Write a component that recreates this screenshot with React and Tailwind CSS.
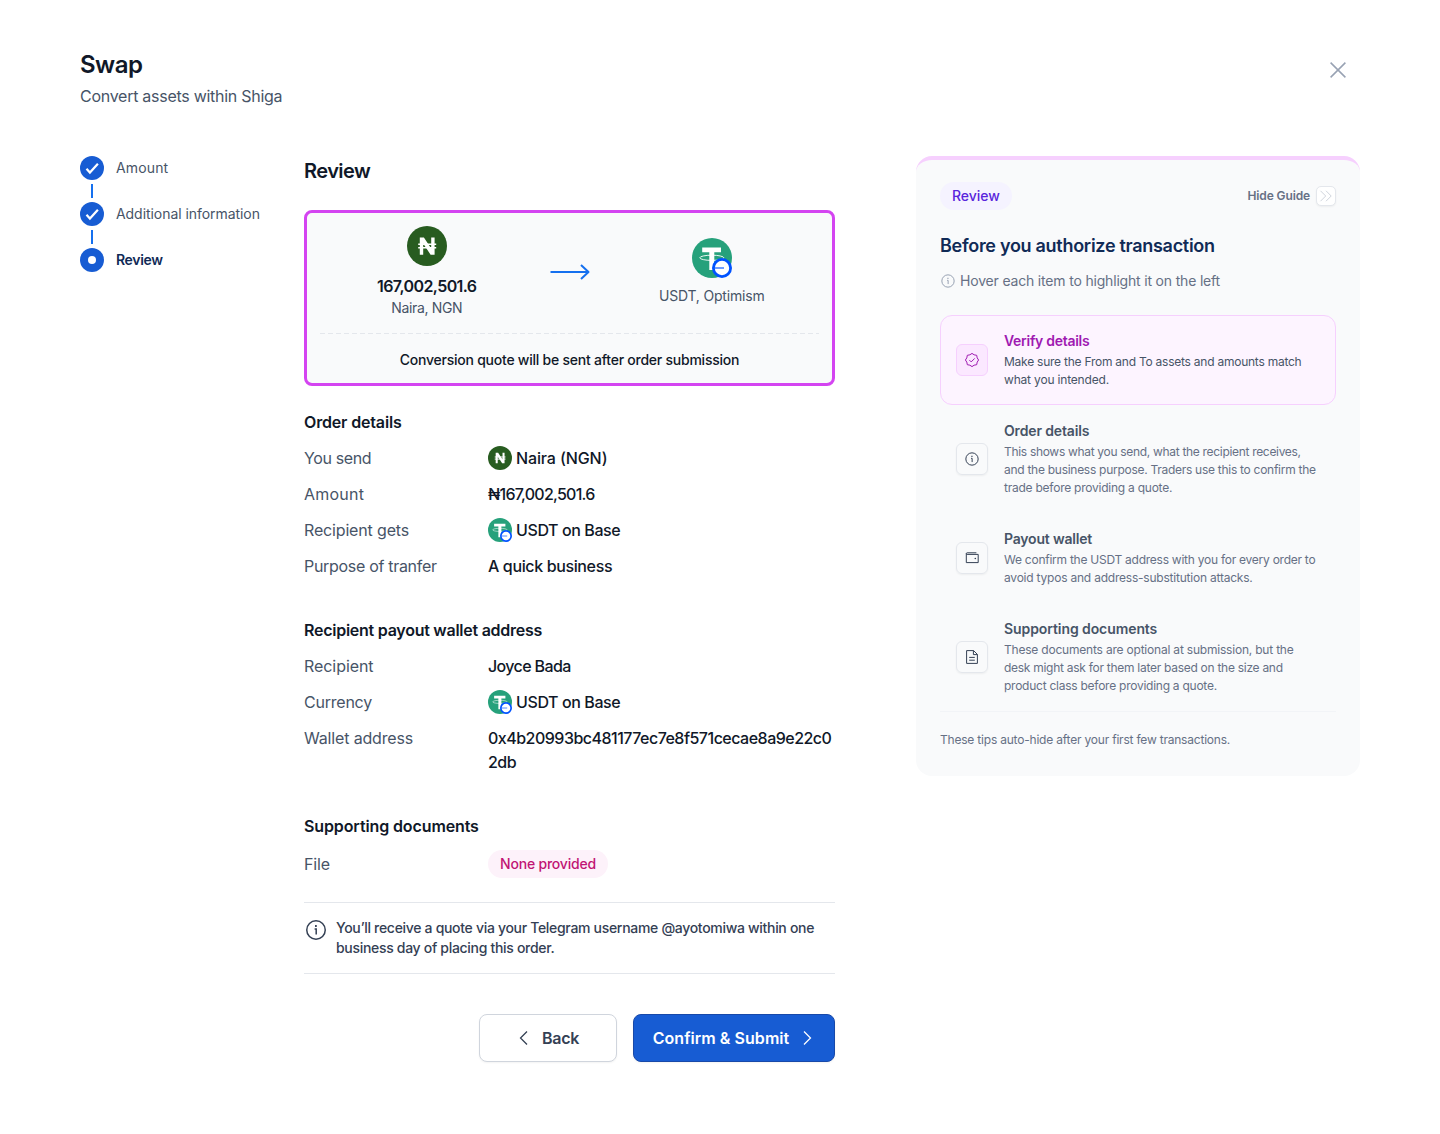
import React from "react";

function NairaIcon({ className }) {
  return (
    <svg viewBox="0 0 40 40" className={className} fill="none">
      <circle cx="20" cy="20" r="20" fill="#285c20" />
      <path d="M12.8 28.8V11.4h4.1l7.3 11V11.4h3.4v17.4h-4l-7.4-11.2v11.2z" fill="#fff" />
      <path d="M11.2 18.3h18M11.2 21.8h18" stroke="#fff" strokeWidth="1.6" />
    </svg>
  );
}

function UsdtIcon({ className }) {
  return (
    <svg viewBox="0 0 40 40" className={className} fill="none">
      <circle cx="20" cy="20" r="20" fill="#26a17b" />
      <path d="M10.2 9.6h18.8v4.6h-6.7V32h-5V14.2h-7.1z" fill="#fff" />
      <ellipse cx="19.8" cy="19.8" rx="12" ry="2.6" stroke="#fff" strokeWidth="0.9" />
      <circle cx="30" cy="30" r="8.6" fill="#fff" stroke="#0052ff" strokeWidth="2.8" />
      <path d="M22.5 30H32" stroke="#0052ff" strokeWidth="1.5" strokeOpacity="0.75" />
    </svg>
  );
}

function InfoIcon({ className, strokeWidth = 1.5 }) {
  return (
    <svg viewBox="0 0 24 24" className={className} fill="none" stroke="currentColor" strokeWidth={strokeWidth}>
      <circle cx="12" cy="12" r="9.25" />
      <path d="M10.6 11h1.6v5.6" />
      <path d="M11.9 7v1.9" strokeWidth={strokeWidth * 1.15} />
    </svg>
  );
}

function VerifyIcon({ className }) {
  return (
    <svg viewBox="0 0 16 16" className={className} fill="none" stroke="currentColor" strokeLinejoin="round">
      <path d="M8 1.4l2.1 1.4 2.6.5.5 2.6L14.6 8l-1.4 2.1-.5 2.6-2.6.5L8 14.6l-2.1-1.4-2.6-.5-.5-2.6L1.4 8l1.4-2.1.5-2.6 2.6-.5z" />
      <path d="M5.4 8.1l1.8 1.8 3.5-3.5" />
    </svg>
  );
}

function WalletIcon({ className }) {
  return (
    <svg viewBox="0 0 16 16" className={className} fill="none" stroke="currentColor">
      <path d="M12.4 2.8H3.1a.8.8 0 0 0-.8.8v9h11.9V4.4H3.1a.8.8 0 0 1-.8-.8" />
      <circle cx="11.3" cy="8.5" r="0.8" fill="currentColor" stroke="none" />
    </svg>
  );
}

function DocIcon({ className }) {
  return (
    <svg viewBox="0 0 16 16" className={className} fill="none" stroke="currentColor">
      <path d="M2.6 1.6h7l3.8 3.8v9H2.6z" />
      <path d="M9.4 1.6v4h4M5.2 8.4h5.6M5.2 11.2h5.6" />
    </svg>
  );
}

const steps = [
  { label: "Amount", done: true, tracking: "tracking-[0.01em]" },
  { label: "Additional information", done: true, tracking: "tracking-[-0.004em]" },
  { label: "Review", done: false, tracking: "tracking-[-0.025em]" },
];

const guideItems = [
  {
    title: "Verify details",
    titleClass: "tracking-[-0.02em]",
    lines: [
      { text: "Make sure the From and To assets and amounts match", tracking: "tracking-[-0.02em]" },
      { text: "what you intended.", tracking: "tracking-[-0.015em]" },
    ],
    icon: VerifyIcon,
    active: true,
  },
  {
    title: "Order details",
    titleClass: "tracking-[-0.01em]",
    lines: [
      { text: "This shows what you send, what the recipient receives,", tracking: "tracking-[-0.026em]" },
      { text: "and the business purpose. Traders use this to confirm the", tracking: "tracking-[-0.023em]" },
      { text: "trade before providing a quote.", tracking: "tracking-[-0.02em]" },
    ],
    icon: InfoIcon,
  },
  {
    title: "Payout wallet",
    titleClass: "tracking-[-0.014em]",
    lines: [
      { text: "We confirm the USDT address with you for every order to", tracking: "tracking-[-0.021em]" },
      { text: "avoid typos and address-substitution attacks.", tracking: "tracking-[-0.018em]" },
    ],
    icon: WalletIcon,
  },
  {
    title: "Supporting documents",
    titleClass: "tracking-[-0.006em]",
    lines: [
      { text: "These documents are optional at submission, but the", tracking: "tracking-[-0.017em]" },
      { text: "desk might ask for them later based on the size and", tracking: "tracking-[-0.023em]" },
      { text: "product class before providing a quote.", tracking: "tracking-[-0.021em]" },
    ],
    icon: DocIcon,
  },
];

function Stepper() {
  return (
    <ol className="flex w-56 shrink-0 flex-col gap-1">
      {steps.map((step, i) => (
        <React.Fragment key={step.label}>
          {i > 0 && <li className="ml-[11px] h-[14px] w-0.5 bg-[#1570ef]" />}
          <li className="flex items-center gap-3">
            <span className="flex size-6 items-center justify-center rounded-full bg-[#175cd3]">
              {step.done ? (
                <svg viewBox="0 0 24 24" className="size-6" fill="none" stroke="#fff" strokeWidth="2.2">
                  <path d="M6.5 12.8l3.4 3.8 8-8.8" />
                </svg>
              ) : (
                <span className="size-2 rounded-full bg-white" />
              )}
            </span>
            <span
              className={`whitespace-nowrap text-sm ${step.tracking} ${step.done ? "text-[#475467]" : "font-semibold text-[#102a56]"}`}
            >
              {step.label}
            </span>
          </li>
        </React.Fragment>
      ))}
    </ol>
  );
}

function Row({ label, labelClass = "", children }) {
  return (
    <div className="flex text-base leading-6">
      <dt className={`w-[184px] shrink-0 whitespace-nowrap text-[#475467] ${labelClass}`}>{label}</dt>
      <dd className="flex items-center gap-1 whitespace-nowrap font-medium text-[#101828]">{children}</dd>
    </div>
  );
}

function Section({ title, titleClass = "", children }) {
  return (
    <section className="flex flex-col gap-3">
      <h3 className={`text-base leading-6 font-semibold text-[#101828] ${titleClass}`}>{title}</h3>
      {children}
    </section>
  );
}

function SwapSummary() {
  return (
    <div className="mt-6 h-44 rounded-lg border-3 border-[#d444f1] bg-[#f9fafb] p-[13px]">
      <div className="flex h-[92px] items-center">
        <div className="flex flex-1 flex-col items-center">
          <NairaIcon className="size-10" />
          <p className="mt-2 text-base leading-6 font-semibold tracking-[-0.037em] text-[#101828]">167,002,501.6</p>
          <p className="text-sm leading-5 tracking-[-0.024em] text-[#475467]">Naira, NGN</p>
        </div>
        <div className="px-4">
          <svg viewBox="0 0 40 16" className="h-4 w-10" fill="none" stroke="#1570ef" strokeWidth="2">
            <path d="M.5 8h38M31 1l7.5 7L31 15" strokeLinejoin="round" />
          </svg>
        </div>
        <div className="flex flex-1 flex-col items-center">
          <UsdtIcon className="size-10" />
          <p className="mt-2 pr-px text-sm leading-5 tracking-[-0.013em] text-[#475467]">USDT, Optimism</p>
        </div>
      </div>
      <div className="mt-[15px] h-px bg-[repeating-linear-gradient(90deg,#e4e7ec_0_5px,transparent_5px_8px)]" />
      <p className="mt-4 text-center text-sm leading-5 font-medium tracking-[-0.017em] text-[#101828]">
        Conversion quote will be sent after order submission
      </p>
    </div>
  );
}

function Guide() {
  return (
    <aside className="ml-auto h-[620px] w-[444px] rounded-2xl border-t-4 border-[#f6d0fe] bg-[#f9fafb] px-6 pt-[22px]">
      <div className="flex items-center justify-between">
        <span className="flex h-7 items-center rounded-full bg-[#f5f3ff] px-3 text-sm font-medium tracking-[-0.003em] text-[#5925dc]">
          Review
        </span>
        <button className="flex items-center gap-1.5 text-xs font-semibold tracking-[-0.01em] text-[#667085]">
          Hide Guide
          <span className="flex size-5 items-center justify-center rounded-[5px] border border-[#e4e7ec] bg-white shadow-xs">
            <svg viewBox="0 0 16 16" className="size-4" fill="none" stroke="#d0d5dd">
              <path d="M2.5 2.8L7.7 8l-5.2 5.2M8 2.8L13.2 8 8 13.2" />
            </svg>
          </span>
        </button>
      </div>
      <h2 className="mt-[22px] text-lg leading-7 font-semibold tracking-[-0.016em] text-[#102a56]">
        Before you authorize transaction
      </h2>
      <p className="mt-[11px] flex items-center gap-1 text-sm leading-5 tracking-[-0.013em] text-[#667085]">
        <InfoIcon className="size-4 text-[#98a2b3]" />
        Hover each item to highlight it on the left
      </p>
      <ul className="mt-6">
        {guideItems.map(({ title, titleClass, lines, icon: Icon, active }) => (
          <li
            key={title}
            className={`flex items-center gap-4 rounded-xl border p-[15px] ${active ? "border-[#f6d0fe] bg-[#fdf4ff]" : "border-transparent"}`}
          >
            <span
              className={`flex size-8 shrink-0 items-center justify-center rounded-md border ${active ? "border-[#f6d0fe] bg-[#fbe8ff] text-[#9f1ab1]" : "border-[#e4e7ec] text-[#344054] shadow-xs"}`}
            >
              <Icon className="size-4" />
            </span>
            <div className="whitespace-nowrap">
              <h4
                className={`text-sm leading-5 font-semibold ${titleClass} ${active ? "text-[#9f1ab1]" : "text-[#475467]"}`}
              >
                {title}
              </h4>
              <p className={`mt-0.5 text-xs leading-[18px] ${active ? "text-[#475467]" : "text-[#667085]"}`}>
                {lines.map((line) => (
                  <span key={line.text} className={`block ${line.tracking}`}>
                    {line.text}
                  </span>
                ))}
              </p>
            </div>
          </li>
        ))}
      </ul>
      <p className="border-t border-[#f2f4f7] pt-[19px] text-xs leading-[18px] tracking-[-0.017em] text-[#667085]">
        These tips auto-hide after your first few transactions.
      </p>
    </aside>
  );
}

export default function App() {
  return (
    <div className="min-h-[1134px] bg-white px-20 pt-[49px] font-['Inter',sans-serif]">
      <header className="flex items-start justify-between">
        <div>
          <h1 className="text-2xl leading-8 font-semibold tracking-[-0.022em] text-[#101828]">Swap</h1>
          <p className="mt-[3px] text-base leading-6 tracking-[-0.017em] text-[#475467]">Convert assets within Shiga</p>
        </div>
        <button className="mt-[9px] mr-[10px]" aria-label="Close">
          <svg viewBox="0 0 24 24" className="size-6 text-[#98a2b3]" fill="none" stroke="currentColor" strokeWidth="1.5">
            <path d="M4.6 4.6l14.8 14.8M19.4 4.6L4.6 19.4" />
          </svg>
        </button>
      </header>

      <div className="mt-12 flex items-start">
        <Stepper />

        <main className="w-[531px]">
          <h2 className="text-xl leading-[30px] font-semibold tracking-[-0.027em] text-[#101828]">Review</h2>
          <SwapSummary />

          <dl className="mt-6 flex flex-col gap-10">
            <Section title="Order details" titleClass="tracking-[-0.01em]">
              <Row label="You send" labelClass="tracking-[-0.023em]">
                <NairaIcon className="size-6" />
                <span className="tracking-[-0.008em]">Naira (NGN)</span>
              </Row>
              <Row label="Amount" labelClass="tracking-[0.014em]">
                <span className="tracking-[-0.047em]">₦167,002,501.6</span>
              </Row>
              <Row label="Recipient gets" labelClass="tracking-[-0.01em]">
                <UsdtIcon className="size-6" />
                <span className="tracking-[-0.025em]">USDT on Base</span>
              </Row>
              <Row label="Purpose of tranfer" labelClass="tracking-[-0.019em]">
                <span className="tracking-[-0.023em]">A quick business</span>
              </Row>
            </Section>

            <Section title="Recipient payout wallet address" titleClass="tracking-[-0.016em]">
              <Row label="Recipient" labelClass="tracking-[-0.004em]">
                <span className="tracking-[-0.039em]">Joyce Bada</span>
              </Row>
              <Row label="Currency" labelClass="tracking-[-0.014em]">
                <UsdtIcon className="size-6" />
                <span className="tracking-[-0.025em]">USDT on Base</span>
              </Row>
              <Row label="Wallet address" labelClass="tracking-[-0.01em]">
                <span className="tracking-[-0.032em]">
                  0x4b20993bc481177ec7e8f571cecae8a9e22c0
                  <br />
                  2db
                </span>
              </Row>
            </Section>

            <Section title="Supporting documents" titleClass="tracking-[-0.007em]">
              <div className="flex items-center text-base leading-6">
                <dt className="w-[184px] tracking-[-0.01em] text-[#475467]">File</dt>
                <dd className="flex h-7 items-center rounded-full bg-[#fdf2fa] px-3 text-sm font-medium tracking-[-0.014em] text-[#c11574]">
                  None provided
                </dd>
              </div>
            </Section>
          </dl>

          <div className="mt-6 flex gap-2 border-y border-[#e4e7ec] py-[15px]">
            <InfoIcon className="size-6 shrink-0 text-[#344054]" />
            <p className="text-sm leading-5 font-medium tracking-[-0.022em] whitespace-nowrap text-[#344054]">
              You’ll receive a quote via your Telegram username @ayotomiwa within one
              <br />
              business day of placing this order.
            </p>
          </div>

          <div className="mt-10 flex justify-end gap-4">
            <button className="flex h-12 w-[138px] items-center justify-center gap-2 rounded-lg border border-[#d0d5dd] bg-white pr-[3px] text-base font-semibold tracking-[-0.02em] text-[#344054] shadow-xs">
              <svg viewBox="0 0 20 20" className="size-5" fill="none" stroke="currentColor" strokeWidth="1.25">
                <path d="M13 3.5L6.5 10l6.5 6.5" />
              </svg>
              Back
            </button>
            <button className="flex h-12 w-[202px] items-center justify-center gap-2 rounded-lg border border-[#1849a9] bg-[#175cd3] pl-0.5 text-base font-semibold tracking-[0.003em] text-white shadow-xs">
              Confirm &amp; Submit
              <svg viewBox="0 0 20 20" className="size-5" fill="none" stroke="currentColor" strokeWidth="1.25">
                <path d="M7 3.5l6.5 6.5L7 16.5" />
              </svg>
            </button>
          </div>
        </main>

        <Guide />
      </div>
    </div>
  );
}
